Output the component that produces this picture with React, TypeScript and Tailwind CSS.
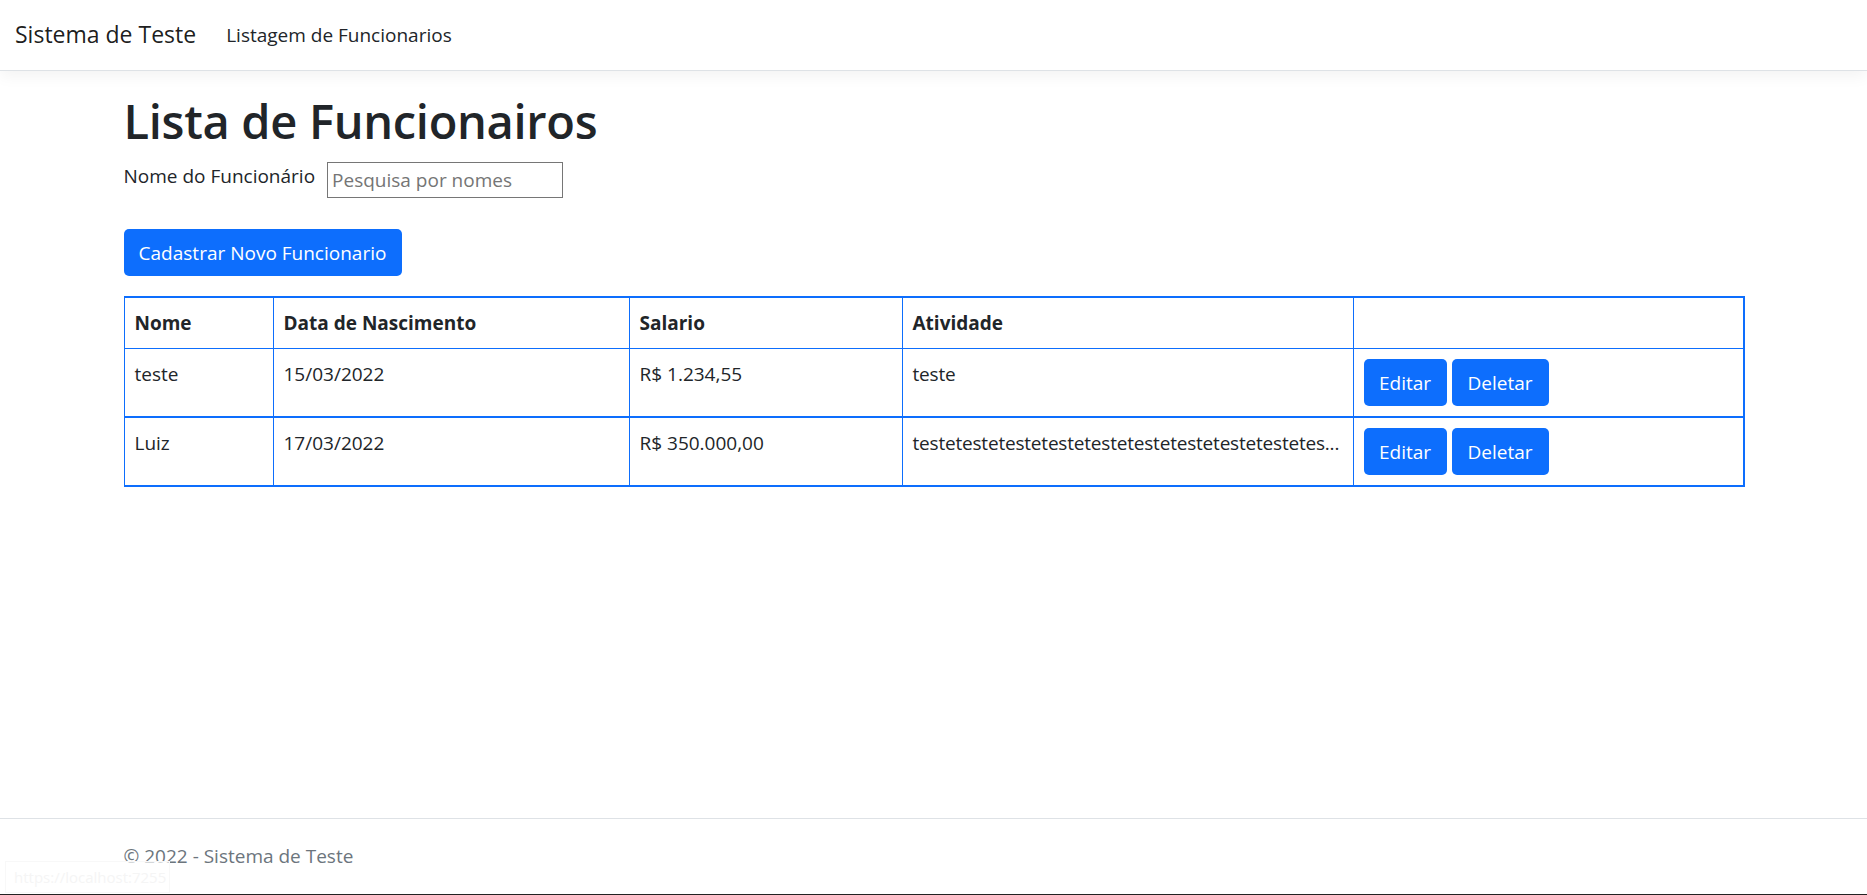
import React from "react";

const rows = [
  { nome: "teste", data: "15/03/2022", salario: "R$ 1.234,55", atividade: "teste" },
  { nome: "Luiz", data: "17/03/2022", salario: "R$ 350.000,00", atividade: "testetestetestetestetestetestetestetestetestetes..." },
];

const cell = "border border-[#0d6efd] p-[10px] align-top";

export default function App() {
  return (
    <div className="relative min-h-screen flex flex-col bg-white text-[#212529] font-['Open_Sans','Noto_Sans',sans-serif]">
      <header>
        <nav className="h-[71px] border-b border-[#dee2e6] bg-white shadow-[0_5px_15px_rgba(0,0,0,0.05)] flex items-start px-[15px] pt-[10px]">
          <a className="text-[23px] leading-[37.5px] py-[6px] text-black/90 mr-[20px] whitespace-nowrap">Sistema de Teste</a>
          <a className="text-[19px] leading-[30px] py-[10px] px-[10px] text-[#212529] whitespace-nowrap">Listagem de Funcionarios</a>
        </nav>
      </header>

      <main className="flex-1 pt-[20px]">
        <div className="w-[1650px] mx-auto px-[15px]">
          <h1 className="text-[47px] leading-[60px] font-semibold mb-[10px] tracking-[-0.3px]">Lista de Funcionairos</h1>
          <div className="flex items-start">
            <label className="text-[19px] leading-[30px] whitespace-nowrap">Nome do Funcionário</label>
            <input
              className="ml-[12px] mt-[1px] w-[236px] h-[36px] border border-[#767676] px-[4px] text-[19px] placeholder:text-[#757575] outline-none"
              placeholder="Pesquisa por nomes"
            />
          </div>
          <button className="mt-[31px] h-[47px] w-[278px] rounded-[5px] bg-[#0d6efd] text-white text-[19px] leading-[30px]">
            Cadastrar Novo Funcionario
          </button>

          <table className="mt-[20px] w-[1620px] table-fixed border-collapse border-t-2 border-r-2 border-b-2 border-l border-[#0d6efd] text-[19px] leading-[30px]">
            <colgroup>
              <col className="w-[149px]" />
              <col className="w-[356px]" />
              <col className="w-[273px]" />
              <col className="w-[451px]" />
              <col className="w-[391px]" />
            </colgroup>
            <thead>
              <tr>
                <th className={`${cell} text-left font-bold`}>Nome</th>
                <th className={`${cell} text-left font-bold`}>Data de Nascimento</th>
                <th className={`${cell} text-left font-bold`}>Salario</th>
                <th className={`${cell} text-left font-bold`}>Atividade</th>
                <th className={`${cell} text-left font-bold`}></th>
              </tr>
            </thead>
            <tbody>
              {rows.map((r, i) => (
                <tr key={i}>
                  <td className={`${cell} ${i === 1 ? "border-t-2" : ""}`}>{r.nome}</td>
                  <td className={`${cell} ${i === 1 ? "border-t-2" : ""}`}>{r.data}</td>
                  <td className={`${cell} ${i === 1 ? "border-t-2" : ""}`}>{r.salario}</td>
                  <td className={`${cell} ${i === 1 ? "border-t-2" : ""}`}>
                    <div className="whitespace-nowrap tracking-[-0.2px]">{r.atividade}</div>
                  </td>
                  <td className={`${cell} ${i === 1 ? "border-t-2" : ""}`}>
                    <div className="flex gap-[5px]">
                      <button className="w-[83px] h-[47px] rounded-[5px] bg-[#0d6efd] text-white text-[19px] leading-[30px]">Editar</button>
                      <button className="w-[97px] h-[47px] rounded-[5px] bg-[#0d6efd] text-white text-[19px] leading-[30px]">Deletar</button>
                    </div>
                  </td>
                </tr>
              ))}
            </tbody>
          </table>
        </div>
      </main>

      <footer className="h-[76px] border-t border-[#dee2e6] text-[#6c757d] text-[19px] leading-[75px] whitespace-nowrap">
        <div className="w-[1650px] mx-auto px-[15px]">© 2022 - Sistema de Teste</div>
      </footer>
      <div className="h-[1px] bg-[#222]" />

      <div className="absolute left-[5px] bottom-[2px] w-[165px] h-[32px] border border-[#f8f8f8] bg-white/70 text-[#f5f5f5] text-[15px] leading-[30px] px-[8px] whitespace-nowrap">
        https://localhost:7255
      </div>
    </div>
  );
}
